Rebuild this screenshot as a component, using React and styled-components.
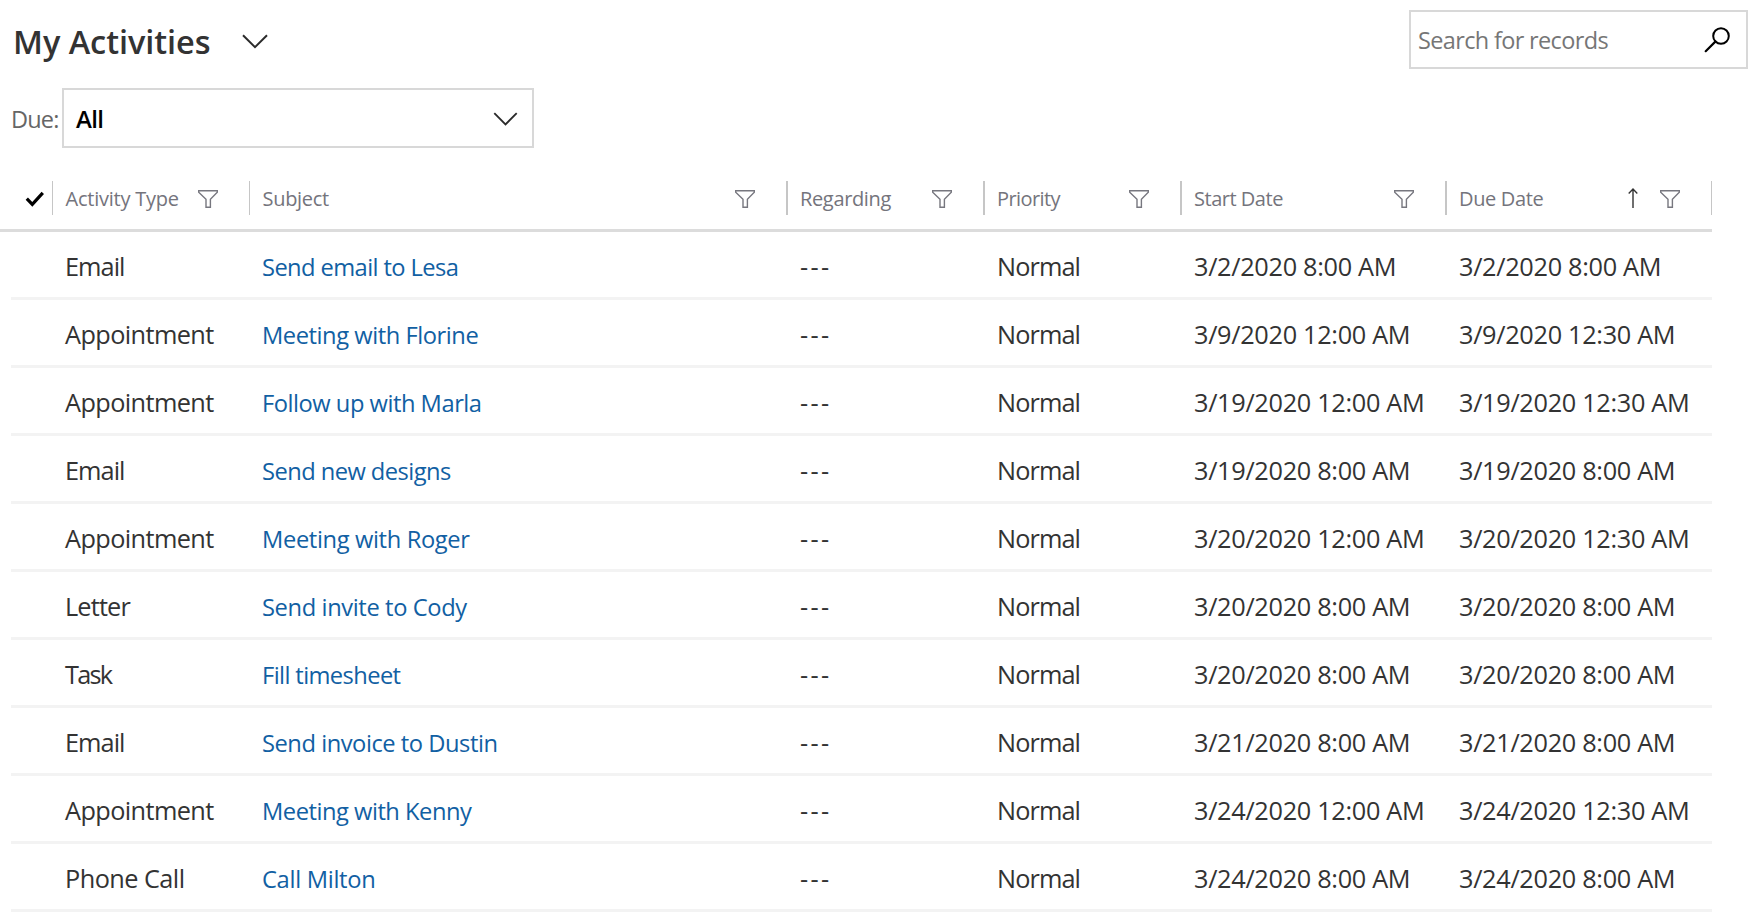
import React from "react";
import styled, { createGlobalStyle } from "styled-components";

const GlobalStyle = createGlobalStyle`
  * { box-sizing: border-box; }
  body {
    margin: 0;
    background: #fff;
    color: #333;
    font-family: "Open Sans", "Noto Sans", sans-serif;
  }
`;

const Page = styled.main`
  width: 1749px;
  height: 918px;
  overflow: hidden;
`;

const TopBar = styled.header`
  display: flex;
  justify-content: space-between;
  align-items: flex-start;
  height: 88px;
  padding: 0 1px 0 13px;
`;

const ViewPicker = styled.div`
  display: flex;
  align-items: center;
  gap: 31px;
  height: 82px;
`;

const Title = styled.h1`
  margin: 0;
  padding-top: 1px;
  font-size: 32.5px;
  font-weight: 600;
  letter-spacing: -0.05px;
  line-height: 44px;
  white-space: nowrap;
`;

const SearchBox = styled.label`
  display: flex;
  align-items: center;
  justify-content: space-between;
  width: 339px;
  height: 59px;
  margin-top: 10px;
  padding: 0 16px 0 7px;
  border: 2px solid #d8d8d8;
`;

const SearchInput = styled.input`
  width: 240px;
  padding: 0;
  border: 0;
  outline: 0;
  background: transparent;
  font: 400 23.5px "Open Sans", "Noto Sans", sans-serif;
  letter-spacing: -0.65px;
  &::placeholder { color: #767676; opacity: 1; }
`;

const FilterBar = styled.section`
  display: flex;
  align-items: center;
  gap: 4px;
  height: 60px;
  padding-left: 11px;
`;

const DueLabel = styled.span`
  width: 47px;
  padding-top: 2px;
  color: #666;
  font-size: 23.5px;
  letter-spacing: -0.8px;
`;

const Select = styled.button`
  display: flex;
  align-items: center;
  justify-content: space-between;
  width: 472px;
  height: 60px;
  padding: 1px 14px 0 12px;
  border: 2px solid #d8d8d8;
  background: #fff;
  color: #000;
  font: 600 24px "Open Sans", "Noto Sans", sans-serif;
  letter-spacing: -0.7px;
`;

const Row = styled.div`
  display: grid;
  grid-template-columns: 197px 537px 197px 197px 265px 266px;
  height: 68px;
  margin-left: 11px;
  padding-left: 41px;
  width: 1701px;
  border-bottom: 3px solid #f3f3f3;
`;

const HeaderRow = styled.div`
  display: grid;
  grid-template-columns: 52px 197px 537px 197px 197px 265px 267px;
  align-items: end;
  width: 1712px;
  height: 84px;
  padding-bottom: 14px;
  border-bottom: 3px solid #dcdcdc;
`;

const CheckCell = styled.div`
  display: flex;
  align-items: center;
  height: 34px;
  padding: 2px 0 0 25px;
`;

const HeaderCell = styled.div`
  display: flex;
  align-items: center;
  height: 34px;
  border-left: ${(p) => p.$rule}px solid #c6c6c6;
  border-right: ${(p) => (p.$last ? "1px solid #c6c6c6" : "0")};
  padding-top: 1px;
  padding-left: ${(p) => (p.$rule === 2 ? 12 : 12.5)}px;
  padding-right: 31px;
  color: #74747c;
  font-size: 20px;
  letter-spacing: ${(p) => p.$track}px;
  white-space: nowrap;
`;

const HeaderText = styled.span`
  flex: ${(p) => (p.$tight ? "0 0 132.5px" : "1")};
`;

const SortIcon = styled.svg`
  flex: none;
  margin: -2px 22px 0 0;
`;

const Cell = styled.div`
  display: flex;
  align-items: center;
  padding: 3px 0 0 13px;
  color: #333;
  font-size: 25.3px;
  letter-spacing: ${(p) => p.$track}px;
  white-space: nowrap;
`;

const Dashes = styled(Cell)`
  padding-left: 14px;
`;

const DateCell = styled(Cell)`
  padding-left: 14px;
`;

const Subject = styled.a`
  display: flex;
  align-items: center;
  padding: 5px 0 0 13px;
  color: #1160a3;
  font-size: 23.7px;
  letter-spacing: ${(p) => p.$track}px;
  text-decoration: none;
  white-space: nowrap;
`;

const Chevron = ({ width, height }) => (
  <svg width={width} height={height} viewBox="0 0 26 15" fill="none">
    <path d="M1 1.2 13 13.2 25 1.2" stroke="#2b2b2b" strokeWidth="2" />
  </svg>
);

const Funnel = () => (
  <svg width="20" height="18" viewBox="0 0 20 18" fill="none">
    <path
      d="M.7 .8H19.3V2.2L12.4 9.2V17.3H8V9.2L.7 2.2Z"
      stroke="#77777f"
      strokeWidth="1.4"
    />
  </svg>
);

const Check = () => (
  <svg width="20" height="16" viewBox="0 0 20 16" fill="none">
    <path d="M1.8 7.6 7.3 13.3 17.8 1.8" stroke="#000" strokeWidth="3.2" />
  </svg>
);

const Magnifier = () => (
  <svg width="26" height="26" viewBox="0 0 26 26" fill="none">
    <circle cx="17" cy="9" r="7.8" stroke="#000" strokeWidth="2" />
    <path d="M11.6 14.4 1.7 24.2" stroke="#000" strokeWidth="2.2" strokeLinecap="round" />
  </svg>
);

const SortArrow = () => (
  <SortIcon width="10" height="20" viewBox="0 0 10 20" fill="none">
    <path d="M5 1V20M.7 5.4 5 1.1 9.3 5.4" stroke="#333" strokeWidth="1.4" />
  </SortIcon>
);

const columns = [
  { label: "Activity Type", rule: 1, track: -0.24, tight: true },
  { label: "Subject", rule: 1, track: -0.3 },
  { label: "Regarding", rule: 2, track: -0.35 },
  { label: "Priority", rule: 2, track: -0.6 },
  { label: "Start Date", rule: 2, track: -0.48 },
  { label: "Due Date", rule: 2, track: -0.35, sorted: true, last: true },
];

const typeTracking = {
  Email: -0.95,
  Appointment: -0.6,
  "Phone Call": -0.55,
  Letter: -0.85,
  Task: -1.8,
};

const activities = [
  ["Email", "Send email to Lesa", "3/2/2020 8:00 AM", "3/2/2020 8:00 AM", -0.59],
  ["Appointment", "Meeting with Florine", "3/9/2020 12:00 AM", "3/9/2020 12:30 AM", -0.45],
  ["Appointment", "Follow up with Marla", "3/19/2020 12:00 AM", "3/19/2020 12:30 AM", -0.48],
  ["Email", "Send new designs", "3/19/2020 8:00 AM", "3/19/2020 8:00 AM", -0.55],
  ["Appointment", "Meeting with Roger", "3/20/2020 12:00 AM", "3/20/2020 12:30 AM", -0.36],
  ["Letter", "Send invite to Cody", "3/20/2020 8:00 AM", "3/20/2020 8:00 AM", -0.38],
  ["Task", "Fill timesheet", "3/20/2020 8:00 AM", "3/20/2020 8:00 AM", -0.6],
  ["Email", "Send invoice to Dustin", "3/21/2020 8:00 AM", "3/21/2020 8:00 AM", -0.46],
  ["Appointment", "Meeting with Kenny", "3/24/2020 12:00 AM", "3/24/2020 12:30 AM", -0.48],
  ["Phone Call", "Call Milton", "3/24/2020 8:00 AM", "3/24/2020 8:00 AM", -0.3],
];

export default function App() {
  return (
    <Page>
      <GlobalStyle />
      <TopBar>
        <ViewPicker>
          <Title>My Activities</Title>
          <Chevron width={26} height={15} />
        </ViewPicker>
        <SearchBox>
          <SearchInput placeholder="Search for records" />
          <Magnifier />
        </SearchBox>
      </TopBar>
      <FilterBar>
        <DueLabel>Due:</DueLabel>
        <Select>
          All
          <Chevron width={25} height={14} />
        </Select>
      </FilterBar>
      <HeaderRow>
        <CheckCell><Check /></CheckCell>
        {columns.map((c) => (
          <HeaderCell key={c.label} $rule={c.rule} $track={c.track} $last={c.last}>
            <HeaderText $tight={c.tight}>{c.label}</HeaderText>
            {c.sorted && <SortArrow />}
            <Funnel />
          </HeaderCell>
        ))}
      </HeaderRow>
      {activities.map(([type, subject, start, due, track]) => (
        <Row key={subject}>
          <Cell $track={typeTracking[type]}>{type}</Cell>
          <Subject $track={track}>{subject}</Subject>
          <Dashes $track={2.3}>---</Dashes>
          <DateCell $track={-0.9}>Normal</DateCell>
          <DateCell $track={-0.32}>{start}</DateCell>
          <DateCell $track={-0.32}>{due}</DateCell>
        </Row>
      ))}
    </Page>
  );
}
